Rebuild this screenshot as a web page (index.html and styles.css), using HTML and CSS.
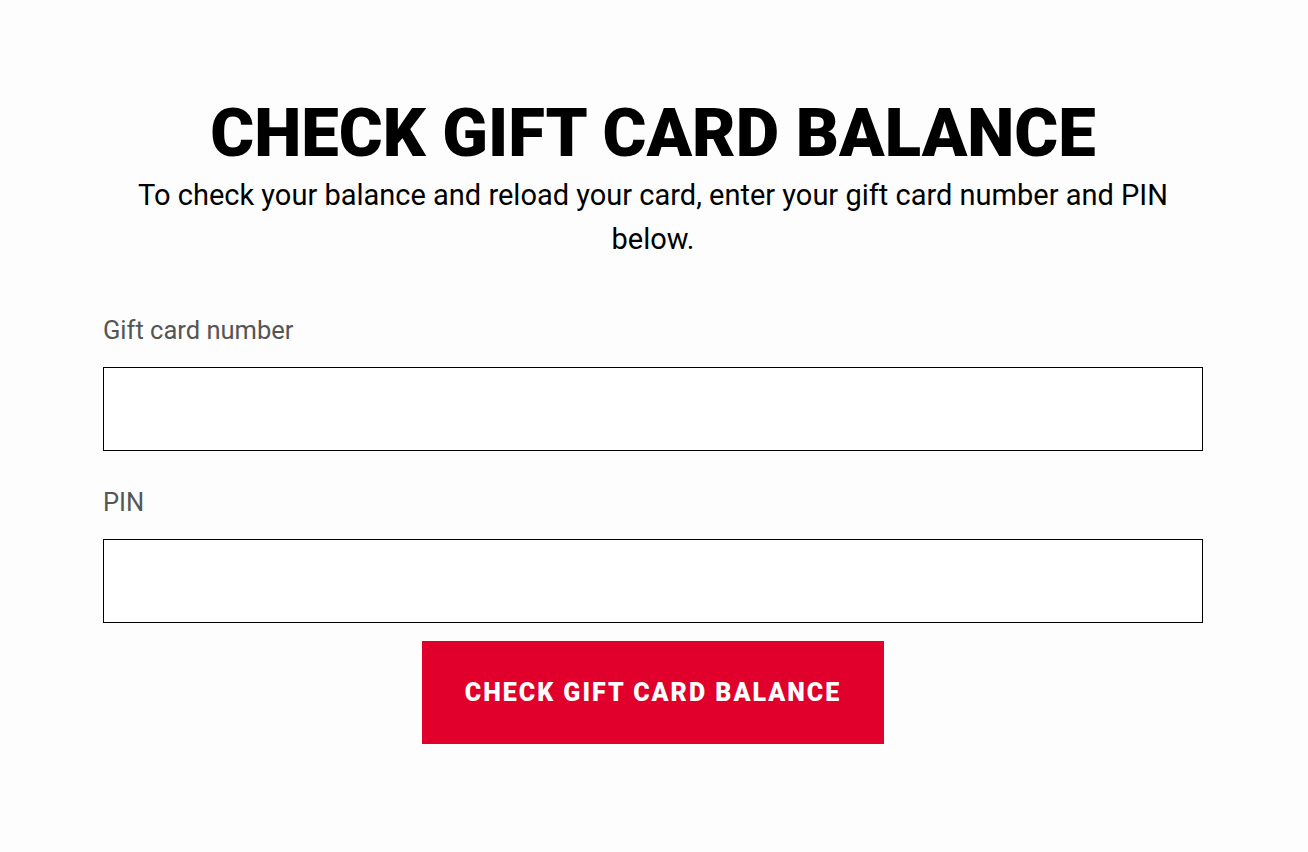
FILE: index.html
```html
<!DOCTYPE html>
<html lang="en">
<head>
    <meta charset="UTF-8">
    <meta name="viewport" content="width=device-width, initial-scale=1.0">
    <title>Check Gift Card Balance</title>
    <link rel="stylesheet" href="styles.css">
</head>
<body>
    <main class="balance-page">
        <h1>Check Gift Card Balance</h1>
        <p class="intro">To check your balance and reload your card, enter your gift card number and PIN below.</p>

        <form class="balance-form" id="balanceForm">
            <div class="form-group">
                <label for="cardNumber">Gift card number</label>
                <input type="text" id="cardNumber">
            </div>
            <div class="form-group">
                <label for="pin">PIN</label>
                <input type="text" id="pin">
            </div>
            <div class="form-actions">
                <button type="submit" class="submit-btn">Check Gift Card Balance</button>
            </div>
        </form>
    </main>
</body>
</html>
```

FILE: styles.css
```css
body {
    font-family: Roboto, 'Liberation Sans', Arial, sans-serif;
    margin: 0;
    padding-right: 2px;
    background-color: #fcfdfc;
    color: #000;
}
.balance-page {
    max-width: 1100px;
    margin: 0 auto;
    padding-top: 93px;
}
h1 {
    margin: 0;
    text-align: center;
    font-size: 67px;
    font-weight: 900;
    line-height: 80px;
    text-transform: uppercase;
}
.intro {
    margin: 0;
    text-align: center;
    font-size: 29px;
    line-height: 44px;
}
.balance-form {
    margin-top: 54px;
}
.form-group + .form-group {
    margin-top: 36px;
}
label {
    display: block;
    font-size: 25.5px;
    line-height: 30px;
    color: #555;
    margin-bottom: 22px;
}
input {
    display: block;
    width: 100%;
    height: 84px;
    box-sizing: border-box;
    border: 1px solid #000;
    border-radius: 0;
    background-color: #fff;
    padding: 0 16px;
    font-family: inherit;
    font-size: 24px;
}
.form-actions {
    display: flex;
    justify-content: center;
    margin-top: 18px;
}
.submit-btn {
    width: 462px;
    height: 103px;
    border: none;
    background-color: #e0002b;
    color: #fff;
    font-family: inherit;
    font-size: 25px;
    font-weight: 900;
    letter-spacing: 2px;
    text-transform: uppercase;
    cursor: pointer;
}
```
